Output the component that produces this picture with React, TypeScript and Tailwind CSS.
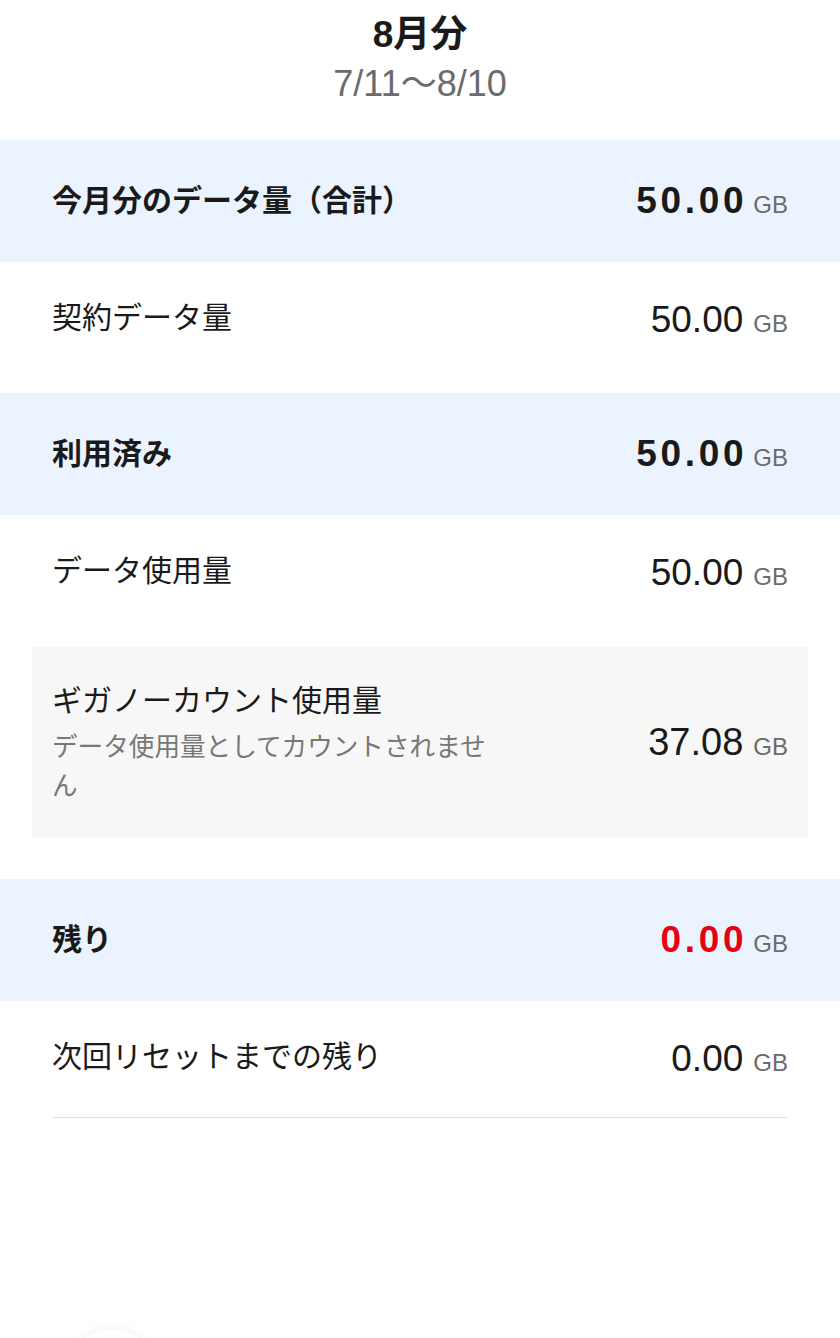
import React from 'react';

const font = { fontFamily: '"Liberation Sans", "Noto Sans CJK JP", sans-serif' };

type Value = { amount: string; red?: boolean };

const Unit = ({ gap = 'ml-[10px]' }: { gap?: string }) => (
    <span className={`${gap} text-[24px] text-[#6b6b6b]`}>GB</span>
);

const BandRow = ({ label, value }: { label: string; value: Value }) => (
    <div className="flex h-[122px] items-center justify-between bg-[#ebf4fe] px-[52px]">
        <span className="text-[30px] font-bold leading-[44px] text-[#1a1a1a]">{label}</span>
        <span className="flex items-baseline">
            <span
                className={`text-[37px] font-bold tracking-[0.1em] ${value.red ? 'text-[#e60012]' : 'text-[#1a1a1a]'}`}
            >
                {value.amount}
            </span>
            <Unit gap="ml-[6px]" />
        </span>
    </div>
);

const PlainRow = ({ label, amount, divider }: { label: string; amount: string; divider?: boolean }) => (
    <div className="px-[52px]">
        <div className={`flex h-[117px] items-start justify-between pt-[34px] ${divider ? 'border-b border-[#e2e2e2]' : ''}`}>
            <span className="text-[30px] leading-[44px] text-[#1a1a1a]">{label}</span>
            <span className="flex items-baseline pt-[2px]">
                <span className="text-[37px] leading-[44px] text-[#1a1a1a]">{amount}</span>
                <Unit />
            </span>
        </div>
    </div>
);

export default function App() {
    return (
        <div className="relative min-h-[1338px] w-full overflow-hidden bg-white" style={font}>
            <div className="flex h-[140px] flex-col items-center pt-[12px]">
                <div className="text-[37px] font-bold leading-[46px] text-[#1a1a1a]">8月分</div>
                <div className="mt-[4px] text-[36px] leading-[44px] text-[#6b6b6b]">7/11〜8/10</div>
            </div>

            <BandRow label="今月分のデータ量（合計）" value={{ amount: '50.00' }} />
            <div className="h-[131px]">
                <PlainRow label="契約データ量" amount="50.00" />
            </div>

            <BandRow label="利用済み" value={{ amount: '50.00' }} />
            <div className="h-[132px]">
                <PlainRow label="データ使用量" amount="50.00" />
            </div>

            <div className="mx-[32px] flex h-[191px] items-center justify-between bg-[#f7f7f7] px-[20px]">
                <div className="w-[450px]">
                    <div className="text-[30px] leading-[44px] text-[#1a1a1a]">ギガノーカウント使用量</div>
                    <div className="mt-[5px] text-[25.6px] leading-[39px] text-[#777777]">
                        データ使用量としてカウントされません
                    </div>
                </div>
                <span className="flex items-baseline">
                    <span className="text-[38px] text-[#1a1a1a]">37.08</span>
                    <Unit />
                </span>
            </div>

            <div className="h-[41px]" />

            <BandRow label="残り" value={{ amount: '0.00', red: true }} />
            <PlainRow label="次回リセットまでの残り" amount="0.00" divider />

            <div className="absolute left-[64px] top-[1330px] h-[96px] w-[96px] rounded-full bg-white shadow-[0_0_14px_rgba(0,0,0,0.06)]" />
        </div>
    );
}
